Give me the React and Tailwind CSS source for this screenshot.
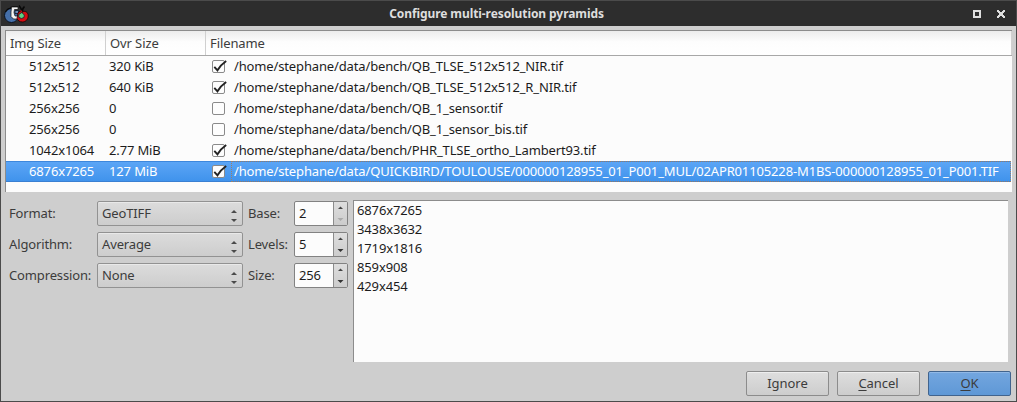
const rows = [
  ["512x512", "320 KiB", true, "/home/stephane/data/bench/QB_TLSE_512x512_NIR.tif"],
  ["512x512", "640 KiB", true, "/home/stephane/data/bench/QB_TLSE_512x512_R_NIR.tif"],
  ["256x256", "0", false, "/home/stephane/data/bench/QB_1_sensor.tif"],
  ["256x256", "0", false, "/home/stephane/data/bench/QB_1_sensor_bis.tif"],
  ["1042x1064", "2.77 MiB", true, "/home/stephane/data/bench/PHR_TLSE_ortho_Lambert93.tif"],
  ["6876x7265", "127 MiB", true, "/home/stephane/data/QUICKBIRD/TOULOUSE/000000128955_01_P001_MUL/02APR01105228-M1BS-000000128955_01_P001.TIF"],
];

const fields = [
  ["Format:", "GeoTIFF", "Base:", "2", true],
  ["Algorithm:", "Average", "Levels:", "5", false],
  ["Compression:", "None", "Size:", "256", false],
];

const sizes = ["6876x7265", "3438x3632", "1719x1816", "859x908", "429x454"];

function AppIcon() {
  return (
    <svg width="26" height="20" viewBox="0 0 26 20" className="block">
      <ellipse cx="7.500" cy="11.500" rx="7" ry="7" fill="#456fa9" stroke="#0b1422" />
      <path d="M6.500 3.500Q9 2.500 14 3M1.500 8Q3 4.500 7 4" fill="none" stroke="#080808" strokeWidth="1.200" />
      <path d="M7.500 3h6.500v2.500h-3.500l-.5 3 1 3.500h4v3h-5.500L7 12.500V8z" fill="#f4f4f4" stroke="#111" strokeWidth=".7" />
      <path d="M11 6.500h3.500v3H11z" fill="#6f8fbc" stroke="#0b1422" strokeWidth=".8" />
      <path d="M14 9c1-2 3-2 4.500-1.200 3-1.300 5.700.7 5.700 4 0 4-3 6.200-5.700 6.200-3 0-4.500-1.500-5.500-3.500z" fill="#d40d12" stroke="#160000" strokeWidth=".8" />
      <path d="M18.300 8.500C17.500 5 16.500 3 15 1.500M18.300 7.500C18.500 5 19 3.500 20.500 2.500" fill="none" stroke="#080808" strokeWidth="1.600" />
      <path d="M16.500 6.500l1.500 1.500" fill="none" stroke="#c01015" strokeWidth="1.200" />
      <path d="M14.800 10.500l3-2 2.500 2.500-.3 2.500-2.700 1-2.500-1.300z" fill="#5fd080" stroke="#123" strokeWidth=".8" />
    </svg>
  );
}

function Check({ on }) {
  return (
    <svg width="16" height="15" viewBox="0 0 16 15" className="block">
      <rect x="0.5" y="1.500" width="12" height="12" rx="1.500" fill="#fdfdfd" stroke="#8a8a8a" />
      {on && <path d="M2.300 7.800L5.500 11.300Q8.500 6 14.200 2" fill="none" stroke="#222" strokeWidth="1.900" />}
    </svg>
  );
}

function Arrows({ dim, small }) {
  return small ? (
    <svg width="13" height="23" viewBox="0 0 13 23" className="block">
      <path d="M4 7h5L6.500 4.500z" fill="#444" />
      <path d="M3.500 16h6L6.500 19z" fill={dim ? "#aaa" : "#333"} />
    </svg>
  ) : (
    <svg width="8" height="23" viewBox="0 0 8 23" className="block">
      <path d="M1 11h6L4 8z" fill="#4a4a4a" />
      <path d="M1 17h6L4 20z" fill="#4a4a4a" />
    </svg>
  );
}

function Button({ children, primary }) {
  return (
    <button
      className={
        "flex h-[25px] w-[83px] items-center justify-center rounded-[2px] border tracking-[-0.05px] " +
        (primary
          ? "border-[#41648e] bg-linear-to-b from-[#73a6df] to-[#5f98d6] shadow-[inset_0_1px_0_#91b9e7]"
          : "border-[#8c8c8c] bg-linear-to-b from-[#dedede] to-[#cdcdcd] shadow-[inset_0_1px_0_#eee]")
      }
    >
      <span>{children}</span>
    </button>
  );
}

export default function App() {
  return (
    <div className="flex h-[402px] w-[1017px] flex-col border border-[#4b4b4b] bg-[#cecece] font-['Noto_Sans',sans-serif] text-[13px] leading-[21px] tracking-[-0.14px] whitespace-nowrap text-[#3c3c3c]">
      <header className="flex h-[25px] items-center bg-[#2d2d2d] pr-[2px] pl-[3px]">
        <div className="w-[70px]"><AppIcon /></div>
        <h1 className="flex-1 pr-[53px] pb-px text-center text-[12px] font-bold tracking-[-0.08px] text-[#dedede]">Configure multi-resolution pyramids</h1>
        <svg width="42" height="12" viewBox="0 0 42 12" shapeRendering="crispEdges" className="block">
          <rect x="2" y="3" width="6" height="6" fill="none" stroke="#dedede" strokeWidth="2" />
          <path d="M25 2h2v1h1v1h2V3h1V2h2v2h-1v1h-1v2h1v1h1v2h-2V9h-1V8h-2v1h-1v1h-2V8h1V7h1V5h-1V4h-1z" fill="#dedede" />
        </svg>
      </header>

      <section className="mt-1 ml-1 h-[162px] w-[1007px] border-t border-l border-[#8c8c8c] bg-[#fcfcfc]">
        <div className="flex h-[25px] border-b border-[#a8a8a8] bg-linear-to-b from-[#ececec] via-[#fdfdfd] via-45% to-white leading-[25px] tracking-[-0.1px]">
          <div className="w-[100px] border-r border-[#d0d0d0] pl-1">Img Size</div>
          <div className="w-[100px] border-r border-[#d0d0d0] pl-1">Ovr Size</div>
          <div className="flex-1 border-r border-[#d0d0d0] pl-1">Filename</div>
        </div>
        {rows.map(([img, ovr, on, file], i) => (
          <div
            key={i}
            className={
              "flex h-[21px] items-center " +
              (i === 5
                ? "mr-px border-y border-t-[#3d87dc] border-b-[#3a80d2] bg-linear-to-b from-[#5ba5f6] to-[#4093ec] text-white"
                : "text-[#1c1c1c]")
            }
          >
            <div className="w-[103px] shrink-0 pl-[23px]">{img}</div>
            <div className="w-[103px] shrink-0">{ovr}</div>
            <div className="w-[19px] shrink-0"><Check on={on} /></div>
            <div className={"h-[21px] min-w-0 flex-1 border border-dotted pl-[2px] leading-[19px] " + (i === 5 ? "border-[#9b8068]" : "border-transparent")}>
              {file}
            </div>
          </div>
        ))}
      </section>

      <main className="mt-2 ml-2 flex h-[162px]">
        <div className="flex w-[344px] flex-col gap-[6px] pt-px">
          {fields.map(([label, value, spinLabel, spin, dim]) => (
            <div key={label} className="flex h-[25px] items-center">
              <div className="w-[88px]">{label}</div>
              <div className="flex h-[25px] w-[146px] justify-between rounded-[2px] border border-[#929292] bg-linear-to-b from-[#dcdcdc] to-[#cdcdcd] pr-1 pl-1 leading-[23px] shadow-[inset_0_1px_0_#e9e9e9]">
                <span>{value}</span>
                <Arrows />
              </div>
              <div className="w-[51px] pl-[5px]">{spinLabel}</div>
              <div className="flex h-[25px] w-[54px] overflow-hidden rounded-[2px] border border-[#828282] bg-[#fcfcfc] leading-[23px] text-[#1c1c1c]">
                <span className="flex-1 pl-1">{spin}</span>
                <div className="border-l border-[#8c8c8c] bg-linear-to-b from-[#dedede] to-[#cccccc]">
                  <Arrows small dim={dim} />
                </div>
              </div>
            </div>
          ))}
        </div>
        <ul className="w-[655px] border-t border-l border-[#8c8c8c] bg-[#fcfcfc] pl-[3px] leading-[19px] text-[#1c1c1c]">
          {sizes.map((s) => <li key={s}>{s}</li>)}
        </ul>
      </main>

      <footer className="mt-[9px] flex justify-end gap-2 pr-[5px]">
        <Button>Ignore</Button>
        <Button><span className="underline underline-offset-2">C</span>ancel</Button>
        <Button primary><span className="underline underline-offset-2">O</span>K</Button>
      </footer>
    </div>
  );
}
